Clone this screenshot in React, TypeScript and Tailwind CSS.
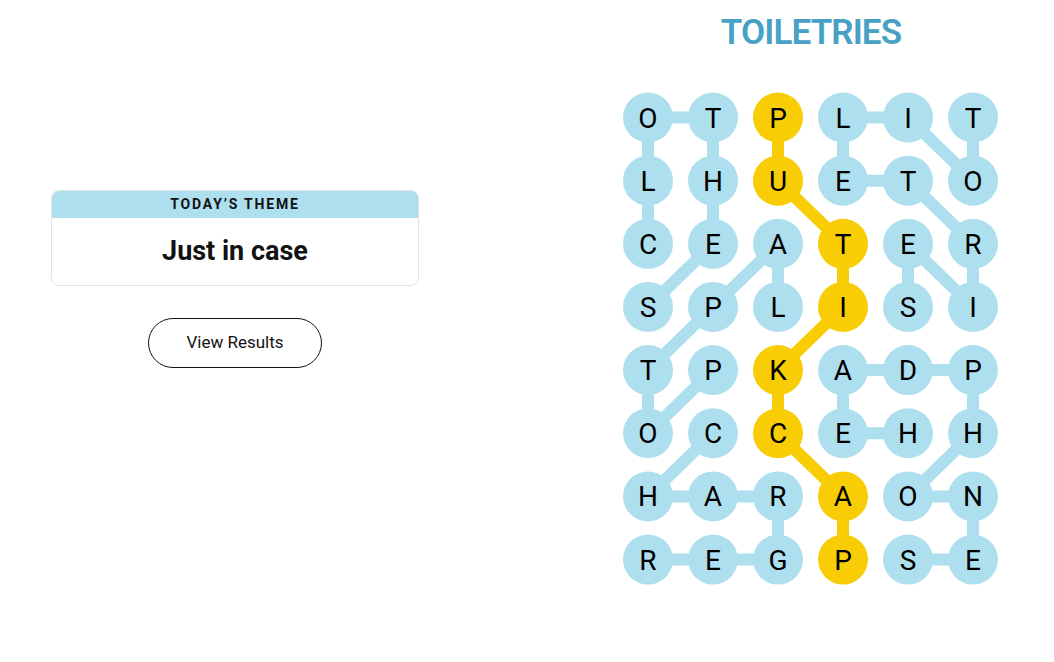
type Cell = [number, number];

const letters = [
	"OTPLIT",
	"LHUETO",
	"CEATER",
	"SPLISI",
	"TPKADP",
	"OCCEHH",
	"HARAON",
	"REGPSE",
];

const words: { path: Cell[]; spangram?: boolean }[] = [
	{ path: [[2, 0], [1, 0], [0, 0], [0, 1], [1, 1], [2, 1], [3, 0]] },
	{ path: [[0, 5], [1, 5], [0, 4], [0, 3], [1, 3], [1, 4], [2, 5], [3, 5], [2, 4], [3, 4]] },
	{ path: [[3, 2], [2, 2], [3, 1], [4, 0], [5, 0], [4, 1]] },
	{ path: [[5, 4], [5, 3], [4, 3], [4, 4], [4, 5], [5, 5], [6, 4], [6, 5], [7, 5], [7, 4]] },
	{ path: [[5, 1], [6, 0], [6, 1], [6, 2], [7, 2], [7, 1], [7, 0]] },
	{ path: [[7, 3], [6, 3], [5, 2], [4, 2], [3, 3], [2, 3], [1, 2], [0, 2]], spangram: true },
];

const BLUE = "#aedfee";
const YELLOW = "#f8cd05";
const cx = (c: number) => 25 + c * 65;
const cy = (r: number) => 25.5 + r * 63.15;

function Board() {
	const colorOf: Record<string, string> = {};
	words.forEach((w) =>
		w.path.forEach(([r, c]) => (colorOf[`${r}-${c}`] = w.spangram ? YELLOW : BLUE))
	);
	return (
		<svg width="376" height="494" viewBox="0 0 376 494">
			{words.map((w, i) => (
				<polyline
					key={i}
					points={w.path.map(([r, c]) => `${cx(c)},${cy(r)}`).join(" ")}
					fill="none"
					stroke={w.spangram ? YELLOW : BLUE}
					strokeWidth="12"
					strokeLinejoin="round"
				/>
			))}
			{letters.map((row, r) =>
				row.split("").map((ch, c) => (
					<g key={`${r}-${c}`}>
						<circle cx={cx(c)} cy={cy(r)} r="25" fill={colorOf[`${r}-${c}`]} />
						<text
							x={cx(c)}
							y={cy(r) + 10}
							textAnchor="middle"
							fontSize="28"
							fontWeight="400"
							fill="#000"
							style={{ fontFamily: "Roboto, sans-serif" }}
						>
							{ch}
						</text>
					</g>
				))
			)}
		</svg>
	);
}

export default function App() {
	return (
		<div className="flex w-[1054px] h-[662px] bg-white font-['Roboto',sans-serif] text-[#121212]">
			<div className="w-[623px] pl-[51px] pt-[190px]">
				<div className="w-[368px] flex flex-col items-center">
					<div className="w-full rounded-lg border border-[#e2e2e2] overflow-hidden">
						<div className="bg-[#aedfee] h-[27px] flex items-center justify-center text-[14px] font-bold tracking-[0.13em] uppercase">
							Today’s Theme
						</div>
						<div className="h-[67px] flex items-center justify-center text-[27px] font-bold">
							Just in case
						</div>
					</div>
					<button className="mt-[32px] w-[174px] h-[50px] rounded-full border border-[#121212] text-[17px]">
						View Results
					</button>
				</div>
			</div>
			<div className="w-[376px] pt-[15px] flex flex-col items-center">
				<div className="h-[36px] leading-[36px] text-[35px] font-semibold text-[#46a1c4] tracking-tight">
					TOILETRIES
				</div>
				<div className="mt-[41px]">
					<Board />
				</div>
			</div>
		</div>
	);
}
